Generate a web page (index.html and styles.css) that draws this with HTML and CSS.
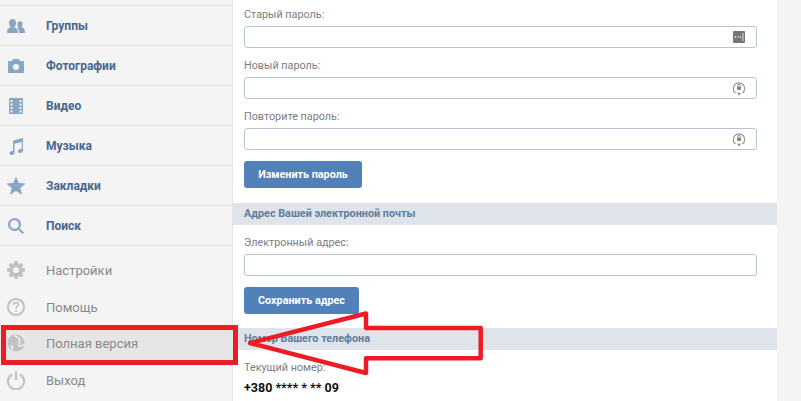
FILE: index.html
```html
<!DOCTYPE html>
<html lang="ru">
<head>
<meta charset="utf-8">
<title>Настройки</title>
<link rel="stylesheet" href="styles.css">
</head>
<body>
<div class="page">
  <nav class="sidebar">
    <div class="stub"></div>
    <a class="nav-item"><svg class="nav-icon blue" viewBox="0 0 20 20"><path d="M1 17c0-4 1.500-5 4-6-1.500-1-2-2.500-2-4.500C3 4 4.500 3 6.500 3S10 4 10 6.500c0 2-.5 3.500-2 4.500 2.500 1 4 2 4 6H1z"/><path d="M13 17c0-3-.8-4.500-2-5.500 0 0 1-.2 1.400-.6-.8-.9-1-2-1-3 0-1.700 1-2.700 2.600-2.700s2.600 1 2.600 2.700c0 1-.3 2.100-1 3 2 .8 3.400 2 3.400 6.100h-6z"/></svg><span>Группы</span></a>
    <a class="nav-item"><svg class="nav-icon blue" viewBox="0 0 20 20"><path fill-rule="evenodd" d="M3.500 5H6l1-2h6l1 2h2.500C17.500 5 18 5.600 18 6.500v9c0 1-.5 1.500-1.500 1.500h-13C2.500 17 2 16.500 2 15.500v-9C2 5.600 2.500 5 3.500 5zM10 8a3 3 0 1 0 0 6 3 3 0 0 0 0-6z"/></svg><span>Фотографии</span></a>
    <a class="nav-item"><svg class="nav-icon blue" viewBox="0 0 20 20"><path fill-rule="evenodd" d="M4 2h12a1 1 0 0 1 1 1v14a1 1 0 0 1-1 1H4a1 1 0 0 1-1-1V3a1 1 0 0 1 1-1zM4.500 4v2h2V4h-2zm0 3.500v2h2v-2h-2zm0 3.500v2h2v-2h-2zm0 3.500v2h2v-2h-2zm9-10.500v2h2V4h-2zm0 3.500v2h2v-2h-2zm0 3.500v2h2v-2h-2zm0 3.500v2h2v-2h-2z"/></svg><span>Видео</span></a>
    <a class="nav-item"><svg class="nav-icon blue" viewBox="0 0 20 20"><path d="M7 4.500 17 2v12.500c0 1.500-1.300 2.500-2.800 2.500-1.300 0-2.200-.7-2.200-1.800 0-1.300 1.300-2.200 2.700-2.200.4 0 .8 0 1.100.2V6L8.500 7.800V16.500c0 1.500-1.300 2.500-2.800 2.500-1.300 0-2.200-.7-2.200-1.800 0-1.300 1.300-2.200 2.700-2.200.4 0 .6 0 .8.200V4.500z"/></svg><span>Музыка</span></a>
    <a class="nav-item"><svg class="nav-icon blue" viewBox="0 0 20 20"><path d="M10 .5l2.700 6.400 6.800.5-5.200 4.500 1.700 6.800-6-3.700-6 3.700 1.700-6.800L.5 7.400l6.800-.5z"/></svg><span>Закладки</span></a>
    <a class="nav-item"><svg class="nav-icon blue" viewBox="0 0 20 20"><path fill-rule="evenodd" d="M8.500 2a6.500 6.500 0 0 1 5.200 10.400l4.300 4.200-1.500 1.500-4.200-4.300A6.500 6.500 0 1 1 8.500 2zm0 2.200a4.300 4.300 0 1 0 0 8.600 4.300 4.300 0 0 0 0-8.600z"/></svg><span>Поиск</span></a>
    <div class="nav-lower">
      <a class="nav-item-lower"><svg class="nav-icon grey" viewBox="0 0 20 20"><path fill-rule="evenodd" d="M8.500 2h3l.5 2.300 1.300.6 2-1.200 2.100 2.100-1.200 2 .5 1.300 2.300.4v3l-2.300.5-.5 1.300 1.200 2-2.100 2.100-2-1.200-1.300.5-.5 2.300h-3L8 17.700l-1.300-.5-2 1.200-2.100-2.100 1.200-2-.5-1.300L1 12.500v-3l2.300-.4.500-1.300-1.200-2 2.100-2.100 2 1.200L8 4.300zM10 8a3 3 0 1 0 0 6 3 3 0 0 0 0-6z" transform="translate(0 -1)"/></svg><span>Настройки</span></a>
      <a class="nav-item-lower"><svg class="nav-icon grey" viewBox="0 0 20 20"><circle class="ring" cx="10" cy="10" r="8"/><path class="ring-thin" d="M7.500 8c0-1.500 1-2.400 2.500-2.400s2.500.9 2.500 2.200c0 1.900-2.500 1.900-2.500 3.900"/><circle cx="10" cy="14.200" r="1"/></svg><span>Помощь</span></a>
      <a class="nav-item-lower"><svg class="nav-icon grey" viewBox="0 0 20 20"><circle cx="10" cy="10" r="8.500"/><path class="cut" d="M9 2.500c1.500 2 4 1.500 4.500 4s-1 3.500-.5 5.500 3 1 4.500-1M7 17c-1-2-.5-3.500-2-5"/></svg><span>Полная версия</span></a>
      <a class="nav-item-lower"><svg class="nav-icon grey" viewBox="0 0 20 20"><path class="ring" d="M6 4.500a8 8 0 1 0 8 0"/><path class="ring" d="M10 1.500v8.500"/></svg><span>Выход</span></a>
    </div>
  </nav>
  <main class="content">
    <div class="form-top">
      <label class="field-label">Старый пароль:</label>
      <div class="input"><svg class="key-icon" viewBox="0 0 14 14"><rect width="12" height="12" x="1" y="1" rx="1" fill="#777"/><path d="M3 7h1M5.500 7h1M8 7h1" stroke="#fff" stroke-width="1.500"/><path d="M11 3v8" stroke="#ddd"/></svg></div>
      <label class="field-label">Новый пароль:</label>
      <div class="input"><svg class="lock-icon" viewBox="0 0 14 16"><path d="M3.500 13A5.700 5.700 0 1 1 10.500 13" fill="none" stroke="#999" stroke-width="1.300"/><rect x="5" y="6.500" width="4" height="3.500" rx=".7" fill="#888"/><path d="M5.800 7V5.500a1.200 1.200 0 0 1 2.400 0V7" fill="none" stroke="#888"/><path d="M5 12.800h4L7.200 15.500" fill="#888"/></svg></div>
      <label class="field-label">Повторите пароль:</label>
      <div class="input"><svg class="lock-icon" viewBox="0 0 14 16"><path d="M3.500 13A5.700 5.700 0 1 1 10.500 13" fill="none" stroke="#999" stroke-width="1.300"/><rect x="5" y="6.500" width="4" height="3.500" rx=".7" fill="#888"/><path d="M5.800 7V5.500a1.200 1.200 0 0 1 2.400 0V7" fill="none" stroke="#888"/><path d="M5 12.800h4L7.200 15.500" fill="#888"/></svg></div>
      <button class="btn btn-password">Изменить пароль</button>
    </div>
    <h2 class="section-head">Адрес Вашей электронной почты</h2>
    <div class="form-block">
      <label class="field-label">Электронный адрес:</label>
      <div class="input"></div>
      <button class="btn btn-address">Сохранить адрес</button>
    </div>
    <h2 class="section-head">Номер Вашего телефона</h2>
    <div class="form-phone">
      <label class="field-label">Текущий номер:</label>
      <div class="phone">+380 **** * ** 09</div>
    </div>
  </main>
  <div class="gutter"></div>
  <div class="mark-frame"></div>
  <svg class="mark-arrow" viewBox="0 0 801 401"><path d="M366 313.500V328H480.700V358.300H366V373L250 343Z"/></svg>
</div>
</body>
</html>
```
FILE: styles.css
```css
* { box-sizing: border-box; }
html, body { margin: 0; padding: 0; }
body { width: 801px; height: 401px; overflow: hidden; background: #f4f4f4; font-family: Roboto, "Liberation Sans", sans-serif; }
.page { position: relative; display: grid; grid-template-columns: 233px 544px 24px; height: 401px; overflow: hidden; }
.sidebar { background: #f4f4f4; border-right: 1px solid #e3e3e3; display: flex; flex-direction: column; }
.stub { height: 6px; border-bottom: 1px solid #e5e5e5; }
.nav-item { height: 40px; flex: none; border-bottom: 1px solid #e5e5e5; display: flex; align-items: center; padding-left: 6px; color: #47668f; font-size: 12px; font-weight: 700; }
.nav-icon { width: 20px; height: 20px; margin-right: 20px; flex: none; }
.blue { fill: #8ba5c5; }
.grey { fill: #c2c2c2; }
.nav-lower { padding-top: 6px; }
.nav-item-lower { height: 36px; display: flex; align-items: center; padding-left: 6px; color: #8a8a8a; font-size: 13px; }
.nav-item-lower:nth-child(even) { margin-top: 1px; }
.nav-item-lower:nth-child(3) { background: #e6e6e6; }
.ring { fill: none; stroke: #c2c2c2; stroke-width: 2.200; }
.ring-thin { fill: none; stroke: #c2c2c2; stroke-width: 1.600; }
.cut { fill: none; stroke: #f0f0f0; stroke-width: 1.500; }
.content { background: #fff; display: flex; flex-direction: column; }
.form-top { padding: 7px 11px 15px; display: flex; flex-direction: column; align-items: flex-start; }
.form-block { padding: 0 11px 14px; display: flex; flex-direction: column; align-items: flex-start; }
.form-phone { padding: 0 11px; }
.field-label { display: block; height: 15px; line-height: 15px; margin: 10px 0 4px; color: #7d7d7d; font-size: 10.8px; }
.form-top .field-label:first-child { margin-top: 0; }
.input { width: 513px; height: 22px; border: 1px solid #b5c4d4; border-radius: 3px; background: #fff; display: flex; align-items: center; justify-content: flex-end; padding-right: 11px; }
.key-icon { width: 14px; height: 14px; margin-right: -1px; }
.lock-icon { width: 14px; height: 16px; margin-right: -1px; }
.btn { display: block; height: 27px; margin-top: 11px; border: 0; border-radius: 3px; background: #5181b8; color: #fff; font-family: inherit; font-size: 10.8px; font-weight: 700; text-align: center; padding: 0; }
.btn-password { width: 118px; }
.btn-address { width: 115px; }
.section-head { margin: 0; height: 22px; line-height: 22px; padding-left: 11px; background: #dee4ea; color: #5f7d9f; font-size: 10.8px; font-weight: 700; }
.phone { margin-top: 5px; color: #111; font-size: 12.500px; font-weight: 700; line-height: 16px; }
.gutter { background: #f4f4f4; }
.mark-frame { position: absolute; left: 1px; top: 325px; width: 237px; height: 40px; border: 5px solid #ed1c24; }
.mark-arrow { position: absolute; left: 0; top: 0; width: 801px; height: 401px; fill: none; stroke: #ed1c24; stroke-width: 4.500; stroke-linejoin: round; }
```
